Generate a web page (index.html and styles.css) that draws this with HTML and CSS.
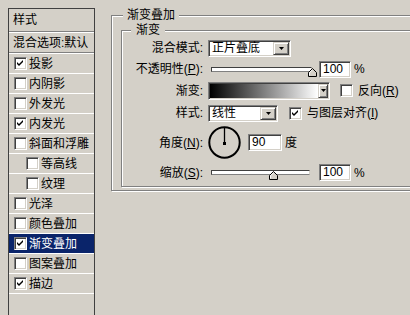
FILE: index.html
```
<!DOCTYPE html>
<html lang="zh-CN">
<head>
<meta charset="utf-8">
<title>图层样式</title>
<link rel="stylesheet" href="styles.css">
</head>
<body>
<div class="dialog">
  <div class="style-list">
    <div class="list-head">样式</div>
    <div class="list-blend">混合选项:默认</div>
    <ul class="items">
      <li class="item"><span class="cb"><svg width="9" height="9" viewBox="0 0 9 9"><polygon points="1,3 3,5 7,1 7,3 3,7 1,5" fill="#000"/></svg></span>投影</li>
      <li class="item"><span class="cb"></span>内阴影</li>
      <li class="item"><span class="cb"></span>外发光</li>
      <li class="item"><span class="cb"><svg width="9" height="9" viewBox="0 0 9 9"><polygon points="1,3 3,5 7,1 7,3 3,7 1,5" fill="#000"/></svg></span>内发光</li>
      <li class="item"><span class="cb"></span>斜面和浮雕</li>
      <li class="item sub"><span class="cb"></span>等高线</li>
      <li class="item sub"><span class="cb"></span>纹理</li>
      <li class="item"><span class="cb"></span>光泽</li>
      <li class="item"><span class="cb"></span>颜色叠加</li>
      <li class="item selected"><span class="cb"><svg width="9" height="9" viewBox="0 0 9 9"><polygon points="1,3 3,5 7,1 7,3 3,7 1,5" fill="#000"/></svg></span>渐变叠加</li>
      <li class="item"><span class="cb"></span>图案叠加</li>
      <li class="item"><span class="cb"><svg width="9" height="9" viewBox="0 0 9 9"><polygon points="1,3 3,5 7,1 7,3 3,7 1,5" fill="#000"/></svg></span>描边</li>
    </ul>
  </div>
  <div class="panel">
    <fieldset class="group outer">
      <legend>渐变叠加</legend>
      <fieldset class="group inner">
        <legend>渐变</legend>
        <div class="row r1">
          <span class="label">混合模式:</span>
          <div class="field select w-mode"><span class="select-text">正片叠底</span><span class="drop"><svg width="5" height="3" viewBox="0 0 5 3"><polygon points="0,0 5,0 2.5,3" fill="#000"/></svg></span></div>
        </div>
        <div class="row r2">
          <span class="label">不透明性(<u>P</u>):</span>
          <div class="slider">
            <div class="track w-long"></div>
            <svg class="thumb" style="left:97px" width="9" height="9" viewBox="0 0 9 9"><polygon points="4.5,0.5 8.5,4.5 8.5,8.5 0.5,8.5 0.5,4.5" fill="#d4d0c8" stroke="#000"/><polyline points="1.5,7.5 1.5,4.8 4.5,1.8" fill="none" stroke="#fff"/></svg>
          </div>
          <span class="field num">100</span>
          <span class="unit">%</span>
        </div>
        <div class="row r3">
          <span class="label">渐变:</span>
          <div class="field grad"><span class="grad-fill"></span><span class="drop narrow"><svg width="5" height="3" viewBox="0 0 5 3"><polygon points="0,0 5,0 2.5,3" fill="#000"/></svg></span></div>
          <span class="cb cb-gap"></span><span>反向(<u>R</u>)</span>
        </div>
        <div class="row r4">
          <span class="label">样式:</span>
          <div class="field select w-style"><span class="select-text">线性</span><span class="drop"><svg width="5" height="3" viewBox="0 0 5 3"><polygon points="0,0 5,0 2.5,3" fill="#000"/></svg></span></div>
          <span class="cb cb-gap2"><svg width="9" height="9" viewBox="0 0 9 9"><polygon points="1,3 3,5 7,1 7,3 3,7 1,5" fill="#000"/></svg></span><span>与图层对齐(<u>I</u>)</span>
        </div>
        <div class="row r5">
          <span class="label">角度(<u>N</u>):</span>
          <svg class="dial" width="33" height="33" viewBox="0 0 33 33"><circle cx="16.5" cy="16.5" r="15.2" fill="none" stroke="#000" stroke-width="2"/><line x1="16.5" y1="17" x2="16.5" y2="2" stroke="#000" stroke-width="1.3"/><rect x="15" y="16" width="3" height="3" fill="#000"/></svg>
          <span class="field num angle">90</span>
          <span class="unit">度</span>
        </div>
        <div class="row r6">
          <span class="label">缩放(<u>S</u>):</span>
          <div class="slider">
            <div class="track w-short"></div>
            <svg class="thumb" style="left:58px" width="9" height="9" viewBox="0 0 9 9"><polygon points="4.5,0.5 8.5,4.5 8.5,8.5 0.5,8.5 0.5,4.5" fill="#d4d0c8" stroke="#000"/><polyline points="1.5,7.5 1.5,4.8 4.5,1.8" fill="none" stroke="#fff"/></svg>
          </div>
          <span class="field num">100</span>
          <span class="unit">%</span>
        </div>
      </fieldset>
    </fieldset>
  </div>
</div>
</body>
</html>
```
FILE: styles.css
```
* { box-sizing: border-box; }
html, body { margin: 0; padding: 0; overflow: hidden; }
body {
  width: 410px; height: 315px;
  background: #d4d0c8;
  font-family: "Liberation Sans", "Noto Sans CJK SC", sans-serif;
  font-size: 12px; line-height: 14px; color: #000;
}
u { text-decoration: underline; }
.dialog { display: flex; align-items: flex-start; padding: 8px 0 0 8px; height: 315px; }

/* left list */
.style-list { width: 87px; height: 320px; flex-shrink: 0; border: 1px solid #404040; border-bottom: none; }
.list-head { height: 23px; padding-left: 4px; display: flex; align-items: center; border-bottom: 1px solid #808080; }
.list-blend { height: 21px; padding-left: 4px; display: flex; align-items: center; border-top: 1px solid #fff; border-bottom: 1px solid #808080; white-space: nowrap; }
.items { list-style: none; margin: 0; padding: 0; border-top: 1px solid #fff; }
.item { height: 20px; padding-left: 5px; display: flex; align-items: center; border-bottom: 1px solid #fff; white-space: nowrap; }
.item.sub { padding-left: 17px; }
.item.selected { background: #0a246a; color: #fff; }

.cb {
  width: 13px; height: 13px; flex-shrink: 0; margin-right: 2px;
  background: #fff;
  border: 1px solid; border-color: #808080 #fff #fff #808080;
  box-shadow: inset 1px 1px 0 #404040, inset -1px -1px 0 #d4d0c8;
  display: flex; align-items: center; justify-content: center;
}
.cb svg { display: block; }
.cb-gap { margin-left: 10px; margin-right: 5px; }
.cb-gap2 { margin-left: 11px; margin-right: 5px; }

/* right panel */
.panel { margin-left: 16px; width: 330px; flex-shrink: 0; }
.group {
  margin: 0; min-width: 0;
  border: 1px solid #808080;
  box-shadow: inset 1px 1px 0 #fff, 1px 1px 0 #fff;
}
.group > legend { background: #d4d0c8; line-height: 14px; }
.outer { padding: 0 0 3px 9px; }
.outer > legend { margin-left: 2px; padding: 0 4px; }
.inner { margin-top: 1px; padding: 1px 0 1px 0; }
.inner > legend { margin-left: 9px; padding: 0 5px; }

.row { display: flex; align-items: center; white-space: nowrap; }
.r1 { height: 20px; }
.r2 { height: 22px; }
.r3 { height: 21px; }
.r4 { height: 24px; }
.r5 { height: 35px; }
.r6 { height: 25px; }
.label { width: 81px; margin-right: 5px; text-align: right; flex-shrink: 0; }

.field {
  background: #fff;
  border: 1px solid; border-color: #808080 #fff #fff #808080;
  box-shadow: inset 1px 1px 0 #404040, inset -1px -1px 0 #d4d0c8;
}
.select { height: 17px; padding: 1px; display: flex; }
.w-mode { width: 83px; }
.w-style { width: 70px; }
.select-text { flex: 1; padding-left: 2px; line-height: 13px; }
.drop {
  width: 16px; background: #d4d0c8;
  border: 1px solid; border-color: #d4d0c8 #404040 #404040 #d4d0c8;
  box-shadow: inset 1px 1px 0 #fff, inset -1px -1px 0 #808080;
  display: flex; align-items: center; justify-content: center;
}
.drop svg { display: block; }
.drop.narrow { width: 10px; }

.grad { width: 122px; height: 18px; padding: 1px; display: flex; }
.grad-fill { flex: 1; background: linear-gradient(to right, #000, #fff); }

.slider { position: relative; width: 108px; height: 17px; margin-left: 3px; }
.track {
  margin-top: 6px; height: 5px;
  background: #fff;
  border: 1px solid; border-color: #404040 #d4d0c8 #808080 #404040;
}
.w-long { width: 101px; }
.w-short { width: 99px; }
.thumb { position: absolute; top: 7px; display: block; }

.num { width: 32px; height: 17px; padding-left: 3px; font-family: "Liberation Sans", sans-serif; font-size: 12px; line-height: 15px; }
.num.angle { width: 34px; margin-left: 7px; }
.unit { margin-left: 3px; }
.dial { display: block; flex-shrink: 0; }
```
